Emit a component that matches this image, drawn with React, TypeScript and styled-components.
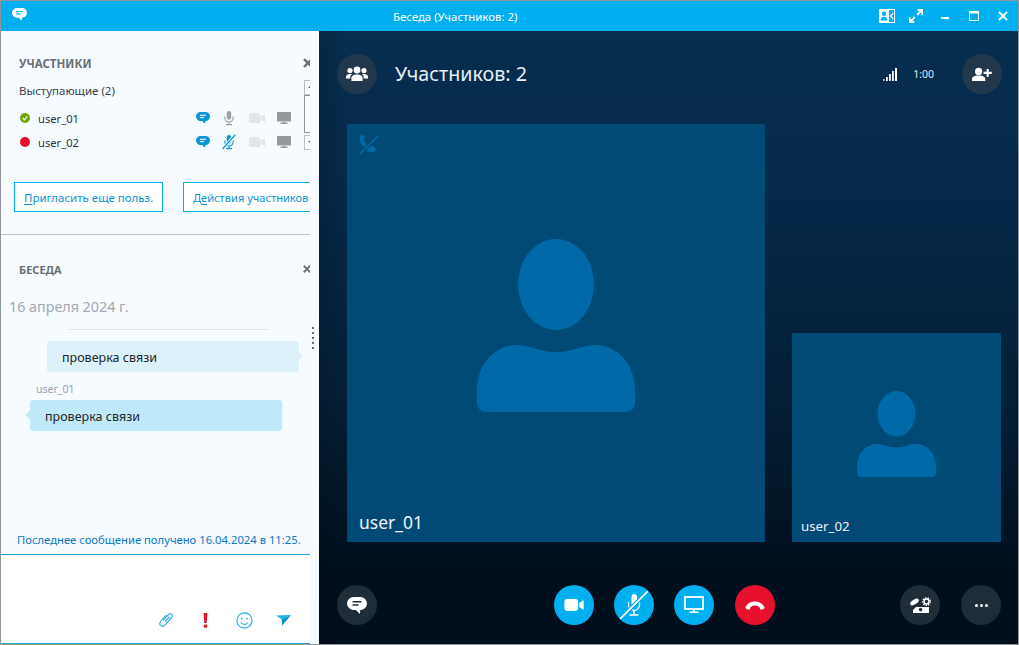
import styled, { createGlobalStyle } from "styled-components";

const GlobalStyle = createGlobalStyle`
  html, body {
    margin: 0;
    padding: 0;
    background: #fff;
  }
  * {
    box-sizing: border-box;
  }
`;

const FONT = `"Noto Sans", "Open Sans", "Liberation Sans", sans-serif`;
const BLUE = "#00aff0";

const Window = styled.div`
  width: 1019px;
  height: 645px;
  display: flex;
  flex-direction: column;
  border: 1px solid #8f969c;
  font-family: ${FONT};
  overflow: hidden;
`;

const TitleBar = styled.div`
  height: 30px;
  flex: none;
  display: flex;
  align-items: center;
  background: ${BLUE};
  color: #fff;
  padding-left: 11px;
`;

const AppIcon = styled.div`
  width: 15px;
  margin-top: -3px;
  display: flex;
`;

const TitleText = styled.div`
  margin-left: 366px;
  padding-top: 1px;
  font-size: 11.4px;
  line-height: 30px;
  white-space: nowrap;
`;

const WindowControls = styled.div`
  margin-left: auto;
  display: flex;
  align-items: center;
  padding-right: 10px;
`;

const WindowControl = styled.div<{ $gap: number; $drop?: number }>`
  display: flex;
  margin-left: ${(p) => p.$gap}px;
  margin-top: ${(p) => p.$drop || 0}px;
`;

const Body = styled.div`
  flex: 1;
  min-height: 0;
  display: flex;
`;

const SidePanel = styled.div`
  width: 318px;
  flex: none;
  display: flex;
  background: #f5fbff;
`;

const SideContent = styled.div`
  width: 309px;
  flex: none;
  display: flex;
  flex-direction: column;
  overflow: hidden;
`;

const Splitter = styled.div`
  flex: 1;
  display: flex;
  flex-direction: column;
  align-items: center;
  justify-content: center;
  gap: 3px;
  padding-right: 3px;
`;

const SplitterDot = styled.span`
  width: 2px;
  height: 2px;
  background: #666d73;
`;

const Participants = styled.section`
  height: 204px;
  flex: none;
  border-bottom: 1px solid #bcc3ca;
  padding: 23px 0 0 18px;
`;

const SectionHead = styled.div`
  display: flex;
  align-items: center;
  justify-content: space-between;
  height: 18px;
`;

const SectionTitle = styled.h2<{ $size: number }>`
  margin: 0;
  font-size: ${(p) => p.$size}px;
  font-weight: 700;
  color: #6b7075;
`;

const CloseMark = styled.div`
  display: flex;
  width: 7px;
  overflow: hidden;

  svg {
    flex: none;
  }
`;

const RosterWrap = styled.div`
  display: flex;
  justify-content: space-between;
  margin-top: 8px;
  height: 70px;
`;

const Roster = styled.div`
  width: 284px;
  padding-top: 2px;
`;

const RosterHead = styled.div`
  font-size: 11.5px;
  line-height: 18px;
  color: #3c4146;
  margin-bottom: 6px;
`;

const ParticipantRow = styled.div`
  display: flex;
  align-items: center;
  height: 24px;
`;

const Presence = styled.span<{ $color: string }>`
  width: 10px;
  height: 10px;
  margin-left: 1px;
  border-radius: 50%;
  background: ${(p) => p.$color};
  display: flex;
  align-items: center;
  justify-content: center;
  flex: none;
`;

const ParticipantName = styled.span`
  width: 157px;
  margin-left: 8px;
  font-size: 11.2px;
  color: #30353a;
`;

const RowIcons = styled.div`
  display: flex;
  align-items: center;
`;

const IconCell = styled.div<{ $w: number }>`
  width: ${(p) => p.$w}px;
  flex: none;
  display: flex;
  justify-content: center;
`;

const ScrollBar = styled.div`
  width: 6px;
  height: 70px;
  display: flex;
  flex-direction: column;
  overflow: hidden;
`;

const ScrollButton = styled.div<{ $down?: boolean }>`
  position: relative;
  height: 15px;
  width: 12px;
  flex: none;
  border: 1px solid #b9bec3;
  background: #fff;

  &::after {
    content: "";
    position: absolute;
    left: 3px;
    top: 5px;
    border-left: 2px solid transparent;
    border-right: 2px solid transparent;
    ${(p) => (p.$down ? "border-top: 2px solid #555;" : "border-bottom: 2px solid #555;")}
  }
`;

const ScrollThumb = styled.div`
  flex: 1;
  width: 12px;
  border: 1px solid #8f9499;
  background: #fff;
  margin-bottom: 2px;
`;

const ButtonRow = styled.div`
  display: flex;
  gap: 20px;
  margin: 32px 0 0 -5px;
`;

const OutlineButton = styled.button<{ $w: number; $fs: number }>`
  width: ${(p) => p.$w}px;
  height: 30px;
  flex: none;
  padding: 0 0 0 9px;
  border: 1px solid ${BLUE};
  background: #fff;
  color: #0a93d6;
  font-family: ${FONT};
  font-size: ${(p) => p.$fs}px;
  text-align: left;
  white-space: nowrap;
  overflow: hidden;

  u {
    text-underline-offset: 2px;
  }
`;

const Chat = styled.section`
  flex: 1;
  min-height: 0;
  display: flex;
  flex-direction: column;
  padding-top: 25px;
`;

const ChatHead = styled(SectionHead)`
  padding-left: 18px;
`;

const DateLabel = styled.div`
  margin: 19px 0 0 8px;
  font-size: 14.3px;
  line-height: 20px;
  color: #a3a9ae;
`;

const DateRule = styled.div`
  width: 200px;
  height: 1px;
  margin: 12px 0 11px 68px;
  background: #e0e3e6;
`;

const Bubble = styled.div<{ $own?: boolean }>`
  position: relative;
  width: 252px;
  height: 31px;
  margin-left: ${(p) => (p.$own ? 46 : 29)}px;
  padding-left: 15px;
  border-radius: 3px;
  background: ${(p) => (p.$own ? "#dcf1fa" : "#bfe8f9")};
  color: #22272b;
  font-size: 12.5px;
  line-height: 33px;

  &::after {
    content: "";
    position: absolute;
    top: 12px;
    ${(p) => (p.$own ? "right: -3px;" : "left: -3px;")}
    width: 6px;
    height: 6px;
    transform: rotate(45deg);
    background: inherit;
  }
`;

const Sender = styled.div`
  margin: 10px 0 4px 35px;
  font-size: 10.5px;
  line-height: 14px;
  color: #9ca2a8;
`;

const LastReceived = styled.div`
  margin-top: auto;
  height: 22px;
  padding-left: 16px;
  font-size: 11.25px;
  line-height: 16px;
  color: #0a78c2;
  white-space: nowrap;
`;

const Composer = styled.div`
  height: 90px;
  flex: none;
  display: flex;
  align-items: flex-end;
  justify-content: flex-end;
  padding: 0 18px 14px 0;
  gap: 21px;
  background: #fff;
  border-top: 1px solid #1ea5dc;
  border-bottom: 1px solid #1ea5dc;
`;

const ComposerIcon = styled.div`
  width: 18px;
  height: 18px;
  display: flex;
  align-items: center;
  justify-content: center;
`;

const Stage = styled.main`
  flex: 1;
  min-width: 0;
  display: flex;
  flex-direction: column;
  background:
    linear-gradient(90deg, rgba(0, 8, 16, 0.16) 0, rgba(0, 8, 16, 0) 28px),
    linear-gradient(180deg, #072e4f 0%, #06294a 25%, #041f36 60%, #010f1d 88%, #010e1b 100%);
`;

const StageHeader = styled.header`
  height: 93px;
  flex: none;
  display: flex;
  align-items: flex-start;
  padding: 23px 16px 0 18px;
`;

const RoundButton = styled.div<{ $bg?: string }>`
  width: 40px;
  height: 40px;
  flex: none;
  border-radius: 50%;
  display: flex;
  align-items: center;
  justify-content: center;
  background: ${(p) => p.$bg || "#21384c"};
`;

const StageTitle = styled.h1`
  margin: 0 0 0 18px;
  font-size: 19.7px;
  font-weight: 400;
  line-height: 40px;
  color: #e9eff4;
`;

const CallStats = styled.div`
  margin-left: auto;
  height: 40px;
  display: flex;
  align-items: center;
  gap: 15px;
  margin-right: 28px;
  font-size: 10.5px;
  color: #e4e9ee;
`;

const VideoRow = styled.div`
  height: 418px;
  flex: none;
  display: flex;
  align-items: flex-end;
  gap: 27px;
  padding-left: 28px;
`;

const Tile = styled.div<{ $small?: boolean }>`
  position: relative;
  width: ${(p) => (p.$small ? 209 : 418)}px;
  height: ${(p) => (p.$small ? 209 : 418)}px;
  padding-bottom: ${(p) => (p.$small ? 7 : 15)}px;
  display: flex;
  align-items: center;
  justify-content: center;
  background: #004a75;
`;

const TileName = styled.div<{ $small?: boolean }>`
  position: absolute;
  left: ${(p) => (p.$small ? 9 : 12)}px;
  bottom: ${(p) => (p.$small ? 7 : 8)}px;
  font-size: ${(p) => (p.$small ? 13.3 : 17.5)}px;
  color: #eef3f6;
`;

const MutedCall = styled.div`
  position: absolute;
  left: 11px;
  top: 10px;
  display: flex;
`;

const StageFooter = styled.footer`
  flex: 1;
  display: flex;
  align-items: flex-start;
  padding: 43px 17px 0 18px;
`;

const CallControls = styled.div`
  display: flex;
  gap: 20px;
  margin-left: 177px;

  & > :last-child {
    margin-left: 1px;
  }
`;

const FooterRight = styled.div`
  margin-left: auto;
  display: flex;
  gap: 21px;
`;

const ChatGlyph = ({ color, width, bar }: { color: string; width: number; bar: string }) => (
  <svg width={width} height={(width * 17) / 20} viewBox="0 0 20 17">
    <path d="M6.500 0h7A6.500 6.500 0 0 1 20 6.500 6.500 6.500 0 0 1 13.500 13H13.200l-.2 4-4.200-4H6.500A6.500 6.500 0 0 1 0 6.500 6.500 6.500 0 0 1 6.500 0z" fill={color} />
    <rect x="5.500" y="4" width="9" height="1.500" fill={bar} />
    <rect x="5.500" y="7.200" width="6" height="1.500" fill={bar} />
  </svg>
);

const MicGlyph = ({ color, slash, slashGap }: { color: string; slash?: string; slashGap?: string }) => (
  <svg width="16" height="16" viewBox="0 0 16 16">
    <rect x="5.800" y="1" width="4.400" height="8.600" rx="2.200" fill={color} />
    <path d="M3.800 6.600v1.200a4.200 4.200 0 0 0 8.400 0V6.600" fill="none" stroke={color} strokeWidth="1.100" />
    <path d="M8 12v2.200M5 14.600h6" stroke={color} strokeWidth="1.200" fill="none" />
    {slash && <path d="M14.400 .6 1.600 15" stroke={slashGap} strokeWidth="3" />}
    {slash && <path d="M14.400 .6 1.600 15" stroke={slash} strokeWidth="1.300" />}
  </svg>
);

const LargeMutedMic = () => (
  <svg width="28" height="28" viewBox="0 0 28 28">
    <rect x="11.500" y="3" width="5.500" height="12" rx="2.700" fill="#fff" />
    <path d="M8.500 11v3a5.500 5.500 0 0 0 11 0v-3" fill="none" stroke="#fff" strokeWidth="1.300" />
    <path d="M14 20v3.500M9.500 24h9" stroke="#fff" strokeWidth="1.500" fill="none" />
    <path d="M28 0 0 28" stroke={BLUE} strokeWidth="4" />
    <path d="M28 0 0 28" stroke="#fff" strokeWidth="1.700" />
  </svg>
);

const CameraGlyph = ({ color, width = 16, height = 10 }: { color: string; width?: number; height?: number }) => (
  <svg width={width} height={height} viewBox="0 0 16 10">
    <rect x="0" y="0" width="11.400" height="10" rx="2" fill={color} />
    <path d="M12.200 3.600 16 .8v8.400l-3.800-2.800z" fill={color} />
  </svg>
);

const MonitorGlyph = ({ color, hollow }: { color: string; hollow?: boolean }) =>
  hollow ? (
    <svg width="20" height="18" viewBox="0 0 20 18">
      <rect x="1" y="1" width="18" height="12" fill="none" stroke={color} strokeWidth="1.800" />
      <path d="M9 14h2v1.600H9zM5.500 15.600h9V17h-9z" fill={color} />
    </svg>
  ) : (
    <svg width="14" height="12" viewBox="0 0 14 12">
      <rect x="0" y="0" width="14" height="9.400" fill={color} />
      <path d="M6 9.400h2v1.200H6zM3.500 10.600h7V12h-7z" fill={color} />
    </svg>
  );

const HangupGlyph = ({ color, size = 20 }: { color: string; size?: number }) => (
  <svg width={size} height={size * 0.5} viewBox="0 0 20 10">
    <path d="M.6 7.200C2.600 3.200 6 1.600 10 1.600s7.400 1.600 9.400 5.600c.3.7.1 1.200-.5 1.500l-2.500 1c-.6.2-1.100 0-1.300-.6l-.7-2c-.9-1.200-2.600-1.700-4.400-1.700s-3.500.5-4.400 1.700l-.7 2c-.2.6-.7.8-1.300.6l-2.500-1C.5 8.400.3 7.900.6 7.200z" fill={color} />
  </svg>
);

const PersonSilhouette = ({ width }: { width: number }) => (
  <svg width={width} height={(width * 173) / 158} viewBox="0 0 158 173" fill="#0069a8">
    <ellipse cx="79" cy="45.500" rx="38" ry="45.500" />
    <path d="M0 152C0 124 18 106 41 106C52 106 62 113 79 113C96 113 106 106 117 106C140 106 158 124 158 152V164C158 169 154 173 149 173H9C4 173 0 169 0 164Z" />
  </svg>
);

const CloseIcon = ({ color, size, weight = 2.400 }: { color: string; size: number; weight?: number }) => (
  <svg width={size} height={size} viewBox="0 0 10 10">
    <path d="M1 1 9 9M9 1 1 9" stroke={color} strokeWidth={weight} />
  </svg>
);

const GroupIcon = () => (
  <svg width="22" height="16" viewBox="0 0 22 16" fill="#fff">
    <circle cx="11" cy="4" r="3.400" />
    <circle cx="4" cy="4.600" r="2.600" />
    <circle cx="18" cy="4.600" r="2.600" />
    <path d="M5.400 15v-2.600C5.400 9.600 7.600 8.400 11 8.400s5.600 1.200 5.600 4V15z" />
    <path d="M0 12.400V11c0-2 1.600-3 4-3 .8 0 1.400.1 2 .3-1.200.8-1.800 2-1.800 3.400v.7zM22 12.400V11c0-2-1.600-3-4-3-.8 0-1.400.1-2 .3 1.200.8 1.800 2 1.800 3.400v.7z" />
  </svg>
);

const AddPersonIcon = () => (
  <svg width="21" height="14" viewBox="0 0 21 14" fill="#fff">
    <circle cx="6.600" cy="4.400" r="3.600" />
    <path d="M0 14v-1.800C0 10 2.400 8.600 6.600 8.600s6.600 1.400 6.600 3.600V14z" />
    <path d="M14.600 2h2.200v2.800h3V7h-3v2.800h-2.200V7h-3V4.800h3z" />
  </svg>
);

const SignalBars = () => (
  <svg width="15" height="14" viewBox="0 0 15 14" fill="#fff">
    <rect x="0" y="12" width="1.600" height="2" opacity=".7" />
    <rect x="3" y="10" width="1.800" height="4" />
    <rect x="6" y="7" width="1.800" height="7" />
    <rect x="9" y="4" width="1.800" height="10" />
    <rect x="12" y="1" width="2" height="13" />
  </svg>
);

const ContactCardIcon = () => (
  <svg width="16" height="14" viewBox="0 0 16 14">
    <rect x=".5" y=".5" width="15" height="13" fill="none" stroke="#fff" />
    <rect x="0" y="0" width="10" height="14" fill="#fff" />
    <circle cx="5" cy="4.800" r="2.200" fill={BLUE} />
    <path d="M1.600 11.400c0-2.400 1.400-3.600 3.400-3.600s3.400 1.200 3.400 3.600z" fill={BLUE} />
    <path d="M14 4.400 11.600 7 14 9.600" fill="none" stroke="#fff" strokeWidth="1.400" />
  </svg>
);

const FullscreenIcon = () => (
  <svg width="14" height="14" viewBox="0 0 14 14" fill="none" stroke="#fff" strokeWidth="1.800">
    <path d="M8 6 13 1M8.600 .9h4.500v4.500M6 8 1 13M.9 8.600v4.500h4.500" />
  </svg>
);

const MinimizeIcon = () => (
  <svg width="8" height="2" viewBox="0 0 8 2">
    <rect width="8" height="2" fill="#fff" />
  </svg>
);

const MaximizeIcon = () => (
  <svg width="10" height="10" viewBox="0 0 10 10">
    <rect x=".5" y=".5" width="9" height="9" fill="none" stroke="#fff" />
    <rect width="10" height="2.500" fill="#fff" />
  </svg>
);

const PaperclipIcon = () => (
  <svg width="16" height="16" viewBox="0 0 16 16" fill="none" stroke="#26a9e0" strokeWidth="1.100">
    <path d="M5.200 8.400 10.400 2.600c1-1.100 2.600-1.100 3.400-.2.8.9.7 2.200-.3 3.300L7.400 12.600c-1.600 1.800-3.600 2-4.800 1-1.200-1-1.200-2.900.3-4.600L8.200 3" />
    <path d="M7 9.800 11.600 4.600" />
  </svg>
);

const SmileIcon = () => (
  <svg width="17" height="17" viewBox="0 0 17 17" fill="none" stroke="#26a9e0" strokeWidth="1.100">
    <circle cx="8.500" cy="8.500" r="7.600" />
    <circle cx="5.900" cy="6.600" r=".9" fill="#26a9e0" stroke="none" />
    <circle cx="11.100" cy="6.600" r=".9" fill="#26a9e0" stroke="none" />
    <path d="M4.800 10.200c1 1.600 2.200 2.200 3.700 2.200s2.700-.6 3.700-2.200" />
  </svg>
);

const SendIcon = () => (
  <svg width="15" height="11" viewBox="0 0 15 11">
    <path d="M0 .4 15 0 5.600 4.200z" fill="#1fb0e8" />
    <path d="M15 0 6.200 10.800 5.600 4.200z" fill="#0e93d2" />
  </svg>
);

const AlertIcon = () => (
  <svg width="5" height="15" viewBox="0 0 5 15">
    <path d="M.6 0h3.800l-.7 10H1.300z" fill="#e8112d" />
    <rect x=".8" y="11.600" width="3.400" height="3.200" rx="1" fill="#e8112d" />
  </svg>
);

const NoCallIcon = () => (
  <svg width="22" height="22" viewBox="0 0 22 22">
    <path d="M1.600 4.200C1.600 2 3.400.8 5 1.200l1 .3c.6.2.9.8.7 1.400l-1 3c-.2.5 0 1 .4 1.500l4.400 5c.4.4.9.6 1.400.4l2.900-.9c.6-.2 1.200 0 1.500.5l1.400 2.500c.4.8.1 1.700-.6 2.300-2.200 1.600-5.500 1.400-8-.7C5.200 13.200 1.400 8.600 1.600 4.200z" fill="#0069a8" />
    <path d="M21 1 1 21" stroke="#004a75" strokeWidth="3.600" />
    <path d="M20.400 1.400 1.400 20.600" stroke="#0069a8" strokeWidth="1.600" />
  </svg>
);

const PhoneSettingsIcon = () => (
  <svg width="21" height="16" viewBox="0 0 21 16">
    <ellipse cx="4.500" cy="5" rx="4.800" ry="2.300" transform="rotate(-32 4.500 5)" fill="#fff" />
    <path d="M3 16v-3l3-3h13v6z" fill="#fff" />
    <circle cx="10.600" cy="12.600" r="1.800" fill="#1f2d38" />
    <circle cx="16.500" cy="4.600" r="2.500" fill="none" stroke="#fff" strokeWidth="1.500" />
    <circle cx="16.500" cy="4.600" r="3.800" fill="none" stroke="#fff" strokeWidth="1.300" strokeDasharray="1.500 1.150" />
  </svg>
);

const MoreIcon = () => (
  <svg width="13" height="3" viewBox="0 0 13 3" fill="#fff">
    <circle cx="1.500" cy="1.500" r="1.500" />
    <circle cx="6.500" cy="1.500" r="1.500" />
    <circle cx="11.500" cy="1.500" r="1.500" />
  </svg>
);

const participants = [
  { name: "user_01", presence: "#6fa800", online: true, muted: false },
  { name: "user_02", presence: "#e8112d", online: false, muted: true },
];

export default function App() {
  return (
    <>
      <GlobalStyle />
      <Window>
        <TitleBar>
          <AppIcon>
            <ChatGlyph color="#fff" width={15} bar={BLUE} />
          </AppIcon>
          <TitleText>Беседа (Участников: 2)</TitleText>
          <WindowControls>
            <WindowControl $gap={0} $drop={-1}>
              <ContactCardIcon />
            </WindowControl>
            <WindowControl $gap={14}>
              <FullscreenIcon />
            </WindowControl>
            <WindowControl $gap={18} $drop={4}>
              <MinimizeIcon />
            </WindowControl>
            <WindowControl $gap={20}>
              <MaximizeIcon />
            </WindowControl>
            <WindowControl $gap={19}>
              <CloseIcon color="#fff" size={10} weight={2} />
            </WindowControl>
          </WindowControls>
        </TitleBar>
        <Body>
          <SidePanel>
            <SideContent>
              <Participants>
                <SectionHead>
                  <SectionTitle $size={11.5}>УЧАСТНИКИ</SectionTitle>
                  <CloseMark>
                    <CloseIcon color="#6b7075" size={10} />
                  </CloseMark>
                </SectionHead>
                <RosterWrap>
                  <Roster>
                    <RosterHead>Выступающие (2)</RosterHead>
                    {participants.map((user) => (
                      <ParticipantRow key={user.name}>
                        <Presence $color={user.presence}>
                          {user.online && (
                            <svg width="6" height="6" viewBox="0 0 6 6">
                              <path d="M.8 3.200 2.400 4.800 5.200 1.400" fill="none" stroke="#fff" strokeWidth="1.200" />
                            </svg>
                          )}
                        </Presence>
                        <ParticipantName>{user.name}</ParticipantName>
                        <RowIcons>
                          <IconCell $w={16}>
                            <ChatGlyph color="#0a94d6" width={14} bar="#fff" />
                          </IconCell>
                          <IconCell $w={36}>
                            {user.muted ? (
                              <MicGlyph color="#0a94d6" slash="#0a94d6" slashGap="#f5fbff" />
                            ) : (
                              <MicGlyph color="#9a9fa4" />
                            )}
                          </IconCell>
                          <IconCell $w={20}>
                            <CameraGlyph color="#e3e5e7" />
                          </IconCell>
                          <IconCell $w={34}>
                            <MonitorGlyph color="#94999e" />
                          </IconCell>
                        </RowIcons>
                      </ParticipantRow>
                    ))}
                  </Roster>
                  <ScrollBar>
                    <ScrollButton />
                    <ScrollThumb />
                    <ScrollButton $down />
                  </ScrollBar>
                </RosterWrap>
                <ButtonRow>
                  <OutlineButton $w={149} $fs={11.5}>
                    <u>П</u>ригласить еще польз.
                  </OutlineButton>
                  <OutlineButton $w={140} $fs={11.1}>
                    Д<u>е</u>йствия участников
                  </OutlineButton>
                </ButtonRow>
              </Participants>
              <Chat>
                <ChatHead>
                  <SectionTitle $size={11}>БЕСЕДА</SectionTitle>
                  <CloseMark>
                    <CloseIcon color="#6b7075" size={8} />
                  </CloseMark>
                </ChatHead>
                <DateLabel>16 апреля 2024 г.</DateLabel>
                <DateRule />
                <Bubble $own>проверка связи</Bubble>
                <Sender>user_01</Sender>
                <Bubble>проверка связи</Bubble>
                <LastReceived>Последнее сообщение получено 16.04.2024 в 11:25.</LastReceived>
                <Composer>
                  <ComposerIcon>
                    <PaperclipIcon />
                  </ComposerIcon>
                  <ComposerIcon>
                    <AlertIcon />
                  </ComposerIcon>
                  <ComposerIcon>
                    <SmileIcon />
                  </ComposerIcon>
                  <ComposerIcon>
                    <SendIcon />
                  </ComposerIcon>
                </Composer>
              </Chat>
            </SideContent>
            <Splitter>
              <SplitterDot />
              <SplitterDot />
              <SplitterDot />
              <SplitterDot />
              <SplitterDot />
            </Splitter>
          </SidePanel>
          <Stage>
            <StageHeader>
              <RoundButton>
                <GroupIcon />
              </RoundButton>
              <StageTitle>Участников: 2</StageTitle>
              <CallStats>
                <SignalBars />
                <span>1:00</span>
              </CallStats>
              <RoundButton>
                <AddPersonIcon />
              </RoundButton>
            </StageHeader>
            <VideoRow>
              <Tile>
                <MutedCall>
                  <NoCallIcon />
                </MutedCall>
                <PersonSilhouette width={158} />
                <TileName>user_01</TileName>
              </Tile>
              <Tile $small>
                <PersonSilhouette width={79} />
                <TileName $small>user_02</TileName>
              </Tile>
            </VideoRow>
            <StageFooter>
              <RoundButton $bg="#1f2d38">
                <ChatGlyph color="#fff" width={20} bar="#1f2d38" />
              </RoundButton>
              <CallControls>
                <RoundButton $bg={BLUE}>
                  <CameraGlyph color="#fff" width={20} height={12} />
                </RoundButton>
                <RoundButton $bg={BLUE}>
                  <LargeMutedMic />
                </RoundButton>
                <RoundButton $bg={BLUE}>
                  <MonitorGlyph color="#fff" hollow />
                </RoundButton>
                <RoundButton $bg="#e8112d">
                  <HangupGlyph color="#fff" />
                </RoundButton>
              </CallControls>
              <FooterRight>
                <RoundButton $bg="#1f2d38">
                  <PhoneSettingsIcon />
                </RoundButton>
                <RoundButton $bg="#1f2d38">
                  <MoreIcon />
                </RoundButton>
              </FooterRight>
            </StageFooter>
          </Stage>
        </Body>
      </Window>
    </>
  );
}
